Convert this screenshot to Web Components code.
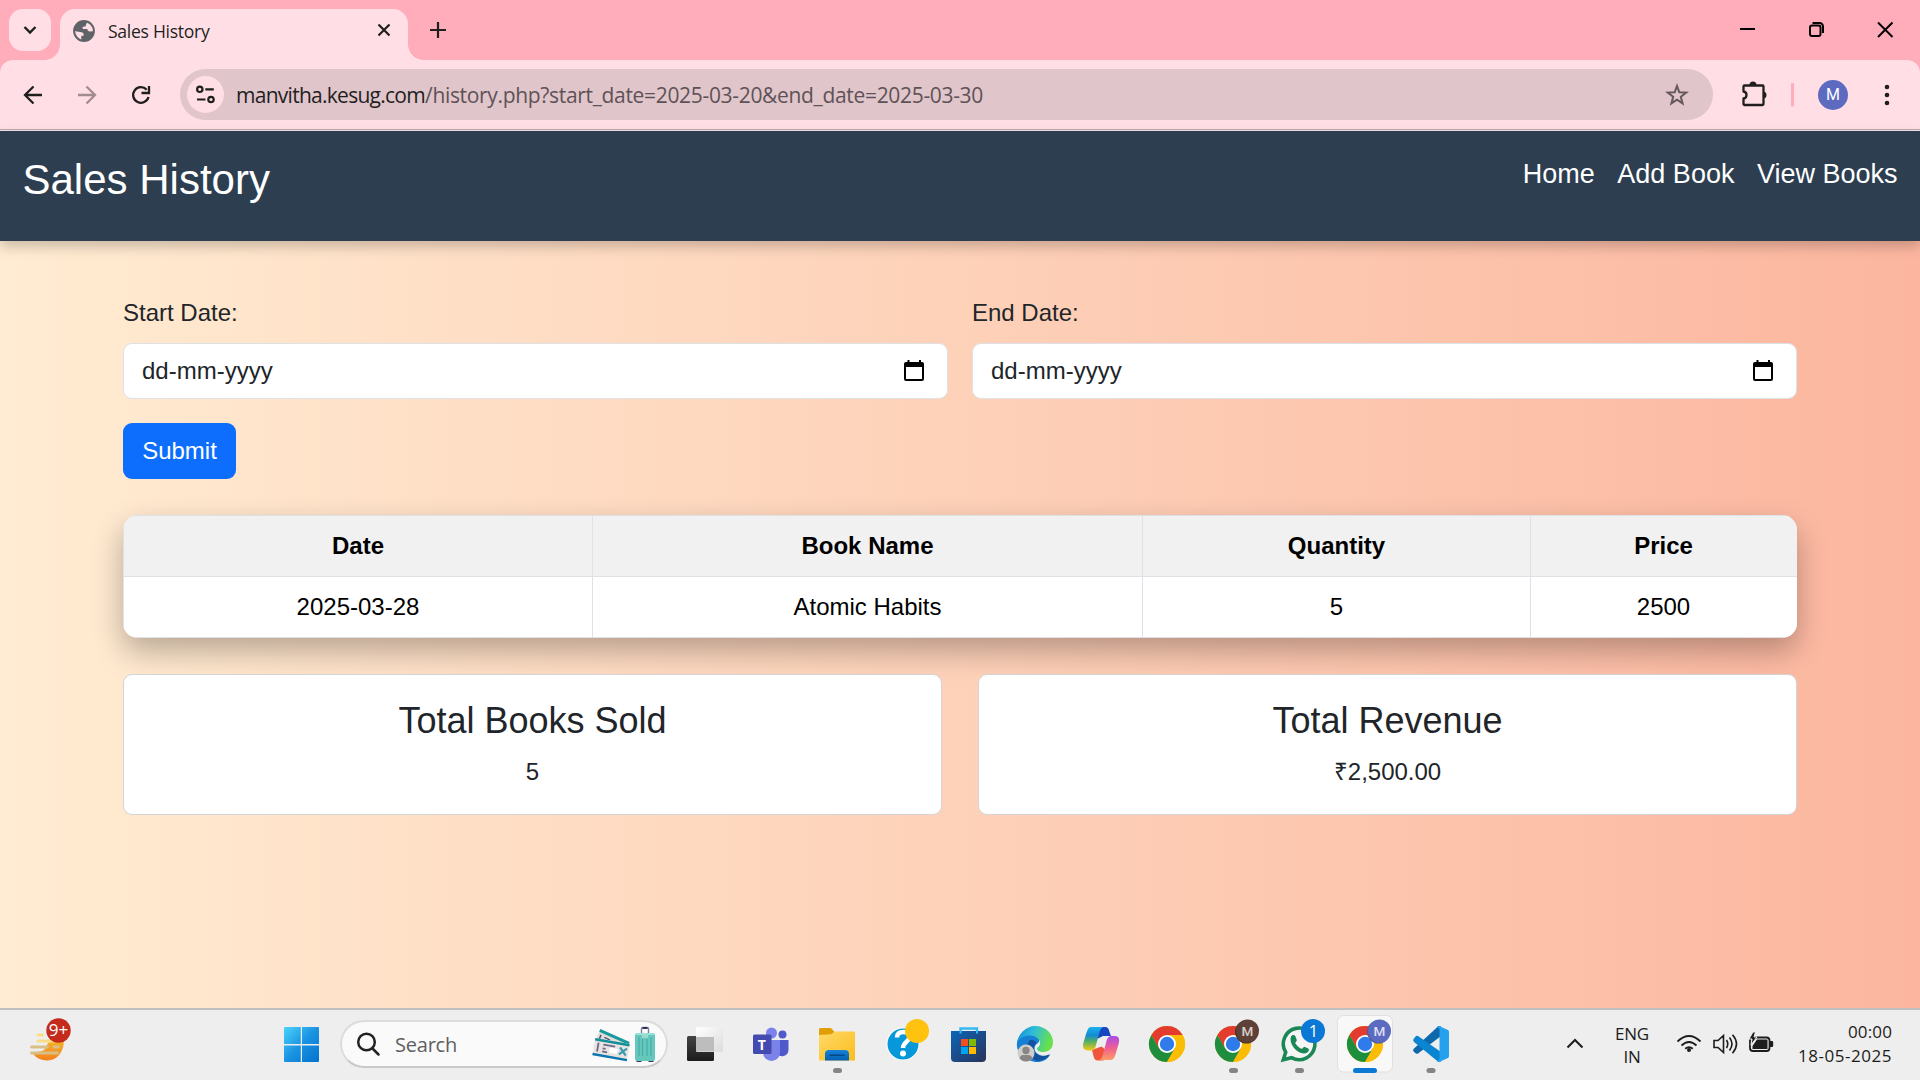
<!DOCTYPE html>
<html lang="en">
<head>
<meta charset="utf-8">
<title>Sales History</title>
<style>
html,body{margin:0;height:100%;overflow:hidden}
body{width:1920px;height:1080px;display:flex;flex-direction:column;font-family:"Open Sans","Noto Sans",sans-serif}
history-page{flex:1;min-height:0}
</style>
</head>
<body>
<browser-chrome></browser-chrome>
<history-page>
  <site-header slot="header" heading="Sales History"><a>Home</a><a>Add Book</a><a>View Books</a></site-header>
  <date-field label="Start Date:" slot="fields"></date-field>
  <date-field label="End Date:" slot="fields"></date-field>
  <sales-table></sales-table>
  <stat-card slot="stats" heading="Total Books Sold">5</stat-card>
  <stat-card slot="stats" heading="Total Revenue">₹2,500.00</stat-card>
</history-page>
<task-bar></task-bar>

<script>
const define = (name, html, init) => {
  const tpl = document.createElement('template');
  tpl.innerHTML = html;
  customElements.define(name, class extends HTMLElement {
    constructor(){ super(); this.attachShadow({mode:'open'}).append(tpl.content.cloneNode(true)); }
    connectedCallback(){ if (init) init(this, this.shadowRoot); }
  });
};

/* One line of text spread over a given width. */
define('fit-text', `<style>:host{display:block;white-space:nowrap;flex:none}span{display:inline-block}</style><span><slot></slot></span>`,
(el, root) => {
  const want = +el.getAttribute('w'), s = root.querySelector('span');
  el.style.width = want + 'px';
  const n = el.textContent.length;
  s.style.letterSpacing = ((want - s.getBoundingClientRect().width) / n) + 'px';
});

define('tab-strip', `<style>
:host{display:flex;height:60px;background:#ffacbb;color:#1f1f1f}
svg{display:block;flex:none}
.drop{width:42px;height:42px;border-radius:14px;background:#ffdfe5;margin:9px 9px 0 9px}
.tab{width:348px;height:51px;margin-top:9px;border-radius:15px 15px 0 0;background:#ffdfe5;display:flex;position:relative}
.tab::before,.tab::after{content:"";position:absolute;bottom:0;width:15px;height:15px}
.tab::before{left:-15px;background:radial-gradient(circle at 0 0,transparent 14.5px,#ffdfe5 15px)}
.tab::after{right:-15px;background:radial-gradient(circle at 100% 0,transparent 14.5px,#ffdfe5 15px)}
.globe{margin:10px 12px 0 12px}
fit-text{font-size:17.6px;line-height:24px;margin-top:10px}
.x{margin:12px 0 0 auto;margin-right:15px}
.plus{margin:20px 0 0 20px}
.win{margin-left:auto}
</style>
<div class="drop"><svg width="42" height="42" fill="none" stroke="#1f1f1f" stroke-width="2.4"><path d="M15.5 18l5.5 5.5 5.5-5.5"/></svg></div>
<div class="tab">
<svg class="globe" width="24" height="24" viewBox="0 0 24 24"><circle cx="12" cy="12" r="9.9" fill="none" stroke="#5f6368" stroke-width="2"/><path fill="#5f6368" d="M12 2.2c-6 0-9.8 4.6-9.8 9.8l7.2 1.2c1.4.2 2.2.9 2.2 2.1v1.4H9.300v4.6l3.400.6c5.400-.5 9-4.600 9.100-9.700l-4.300.2c-1.500 0-2.100-1-2.100-2.300H10.700V7.800l2.400-.2c1-.3.7-1.500.9-2.200l1.600-2.300z"/></svg>
<fit-text w="101.500">Sales History</fit-text>
<svg class="x" width="18" height="18" stroke="#1f1f1f" stroke-width="2.2"><path d="M3.500 3.500l11 11M14.500 3.500l-11 11"/></svg>
</div>
<svg class="plus" width="20" height="20" stroke="#1f1f1f" stroke-width="2.2"><path d="M10 2v16M2 10h16"/></svg>
<svg class="win" width="207" height="60" viewBox="1713 0 207 60" fill="none" stroke="#000" stroke-width="2"><path d="M1740 29h15M1878 22.500l14.500 14.500M1892.500 22.500L1878 37"/><rect x="1810" y="25.500" width="10.500" height="10.500" rx="2"/><path d="M1812.500 23h7a3.500 3.500 0 0 1 3.500 3.500v6.500"/></svg>`);

define('tool-bar', `<style>
:host{display:block;background:#ffacbb}
.in{display:flex;height:69px;background:#ffdfe5;border-radius:13px 13px 0 0}
svg{display:block;flex:none}
.omni{width:1533px;height:51px;margin-top:9px;border-radius:26px;background:#e0c5ca;display:flex;align-items:center;box-sizing:border-box;padding:0 21px 0 7px}
.tune{width:37px;height:37px;border-radius:50%;background:#ffdfe5;margin-right:12px}
.url{display:flex;font-size:21px;line-height:30px;color:#5e5256}
.url fit-text:first-child{color:#1f1f1f}
.star{margin-left:auto}
.me{width:30px;height:30px;border-radius:50%;background:#5c6bc0;color:#fff;font:16px/30px Roboto,sans-serif;text-align:center;margin-top:20px}
.line{height:2px;background:linear-gradient(#bda9ae 1px,#f3dfe4 1px)}
</style>
<div class="in">
<svg width="180" height="69" viewBox="0 60 180 69" fill="none" stroke="#1f1f1f" stroke-width="2.300"><path d="M42 95H26M33.500 86.500L25 95l8.500 8.500"/><path stroke="#a18c91" d="M78 95h16M86.500 86.500L95 95l-8.500 8.500"/><path d="M146.700 89.700A7.800 7.800 0 1 0 148.500 97"/><path d="M149 86v7h-7.500"/></svg>
<div class="omni">
<svg class="tune" width="37" height="37" fill="none" stroke="#1f1f1f" stroke-width="2.200"><circle cx="12.800" cy="13.300" r="2.700"/><path d="M18.300 13.300h8.500M10 23.500h8.500"/><circle cx="24" cy="23.500" r="2.700"/></svg>
<div class="url"><fit-text w="189">manvitha.kesug.com</fit-text><fit-text w="558">/history.php?start_date=2025-03-20&amp;end_date=2025-03-30</fit-text></div>
<svg class="star" width="30" height="30" fill="none" stroke="#66595d" stroke-width="2"><path d="M15 6l2.300 6.300 6.900.3-5.400 4.200 1.800 6.600-5.600-3.800-5.600 3.800 1.800-6.600-5.400-4.200 6.900-.3z"/></svg>
</div>
<svg width="105" height="69" viewBox="1713 60 105 69"><path fill="none" stroke="#1f1f1f" stroke-width="2.300" stroke-linejoin="round" d="M1744.500 85.500h18a1 1 0 0 1 1 1v17.500a1 1 0 0 1-1 1h-18a1 1 0 0 1-1-1v-5.500c4-.5 4-6.500 0-7V86.500a1 1 0 0 1 1-1z"/><path fill="#1f1f1f" d="M1749.500 85a3.500 3.500 0 0 1 7 0zM1763 91.500a3.500 3.500 0 0 1 0 7z"/><rect x="1791" y="83" width="3" height="23.500" rx="1" fill="#ffacbb"/></svg>
<div class="me">M</div>
<svg width="72" height="69" viewBox="1848 60 72 69" fill="#1f1f1f"><circle cx="1887" cy="87" r="2.300"/><circle cx="1887" cy="95" r="2.300"/><circle cx="1887" cy="103" r="2.300"/></svg>
</div><div class="line"></div>`);

define('browser-chrome', `<style>:host{display:block;flex:none;height:131px}</style><tab-strip></tab-strip><tool-bar></tool-bar>`);

define('site-header', `<style>
:host{display:flex;justify-content:space-between;align-items:flex-start;box-sizing:border-box;height:110px;padding:22.500px;background:#2c3e50;color:#fff;box-shadow:0 6px 12px rgba(0,0,0,.2);position:relative}
h1{margin:0;font-size:42px;font-weight:400;line-height:52.500px}
nav{display:flex;gap:22.500px;font-size:27px;line-height:40.500px}
</style><h1></h1><nav><slot></slot></nav>`, (el, r) => r.querySelector('h1').textContent = el.getAttribute('heading'));

define('date-field', `<style>
:host{display:block}
label{display:block;line-height:36px;margin-bottom:12px}
.box{height:56px;box-sizing:border-box;border:1px solid #dee2e6;border-radius:9px;background:#fff;padding:0 18px;display:flex;align-items:center;justify-content:space-between}
svg{margin-right:4px}
</style><label></label><div class="box"><span>dd-mm-yyyy</span><svg width="21" height="22"><path fill="#000" fill-rule="evenodd" d="M3.500 0h2v2h9.500V0h2v2h1q2 0 2 2v15q0 2-2 2h-16q-2 0-2-2V4q0-2 2-2h1.500zM2 7v12h16V7z"/></svg></div>`,
(el, r) => r.querySelector('label').textContent = el.getAttribute('label'));

define('sales-table', `<style>
:host{display:block;border-radius:15px;overflow:hidden;box-shadow:0 13px 30px rgba(0,0,0,.28)}
.t{display:grid;grid-template-columns:468px 549px 387px 266px;gap:1px;background:#dee2e6;border:1px solid #dee2e6;text-align:center;color:#000;line-height:60px}
.t>*{background:#fff;height:60px}
.t>b{background:#f1f1f1}
.t>:nth-child(4n){text-indent:-1px}
</style><div class="t"><b>Date</b><b>Book Name</b><b>Quantity</b><b>Price</b><span>2025-03-28</span><span>Atomic Habits</span><span>5</span><span>2500</span></div>`);

define('stat-card', `<style>
:host{display:block;box-sizing:border-box;height:141px;padding:24px;border:1px solid #d3d4d5;border-radius:9px;background:#fff;text-align:center;position:relative}
h5{margin:0 0 12px;font-size:36px;font-weight:400;line-height:43px}
p{margin:0;line-height:36px}
</style><h5></h5><p><slot></slot></p>`, (el, r) => r.querySelector('h5').textContent = el.getAttribute('heading'));

define('history-page', `<style>
:host{display:block;background:linear-gradient(to right,#ffecd2,#fcb69f);font-family:"Liberation Sans",Arial,sans-serif;font-size:24px;color:#212529}
main{width:1674px;margin:0 auto;padding-top:54px}
.fields{display:grid;grid-template-columns:1fr 1fr;gap:24px}
button{display:block;margin:24px 0 36px;width:113px;height:56px;border:0;border-radius:9px;background:#0d6efd;color:#fff;font:inherit;padding:0}
.stats{display:grid;grid-template-columns:1fr 1fr;gap:36px;margin-top:36px}
</style><slot name="header"></slot><main><div class="fields"><slot name="fields"></slot></div><button>Submit</button><slot></slot><div class="stats"><slot name="stats"></slot></div></main>`);

/* Taskbar icons, all drawn in a 66x70 slot centred on (33,34). */
const chrome = `<circle cx="33" cy="34" r="18" fill="#fbbc05"/><path fill="#e33b2e" d="M17.400 25a18 18 0 0 1 31.200 0H33l-7.800 13.500z"/><path fill="#1e8e3e" d="M17.400 25a18 18 0 0 0 15.600 27l7.800-13.500H25.200z"/><path fill="#fbbc05" d="M48.600 25A18 18 0 0 1 33 52l7.800-13.500L33 25z"/><circle cx="33" cy="34" r="9" fill="#fff"/><circle cx="33" cy="34" r="7.200" fill="#2f7bea"/>`;
const ICONS = {
taskview:`<defs><linearGradient id="a" x2="0" y2="1"><stop stop-color="#444"/><stop offset="1" stop-color="#1c1c1c"/></linearGradient><linearGradient id="b" x2="1" y2="1"><stop stop-color="#fff"/><stop offset="1" stop-color="#dcdcdc"/></linearGradient></defs><rect x="15" y="26" width="27" height="25" rx="1.500" fill="url(#a)"/><rect x="24" y="17" width="27" height="25" rx="1.500" fill="url(#b)"/><path fill="#bdbdbd" d="M24 27h18v14.500H25a1 1 0 0 1-1-1z"/>`,
teams:`<circle cx="33.500" cy="23" r="5.500" fill="#7b83eb"/><circle cx="44.500" cy="24.500" r="4" fill="#5059c9"/><path fill="#5059c9" d="M38 30h12.500v9.500a6 6 0 0 1-12.500 1z"/><path fill="#7b83eb" d="M25 30h17v12.500a8.500 8.500 0 0 1-17 0z"/><rect x="15" y="24.500" width="18.500" height="19.500" rx="1.500" fill="#444bb0"/><text x="23.900" y="39.500" text-anchor="middle" font-family="Open Sans" font-weight="700" font-size="14" fill="#fff">T</text>`,
folder:`<defs><linearGradient id="a" x2="1" y2="1"><stop stop-color="#ffda6a"/><stop offset="1" stop-color="#fbbc1c"/></linearGradient><linearGradient id="b" x2="0" y2="1"><stop stop-color="#1583d8"/><stop offset="1" stop-color="#0461b4"/></linearGradient></defs><path fill="#e19f06" d="M15 19.500q0-1.500 1.500-1.500H26q1 0 2 1l2.500 3V28H15z"/><path fill="url(#a)" d="M15 25l12-.800q1-.2 2-1.200l1.500-1.500H50q1 0 1 1V50.500H15z"/><path fill="url(#b)" d="M21 50.500V44q0-4 4-4h16q4 0 4 4v6.500z"/><path d="M26 45.300h14" stroke="#064787" stroke-width="1.600" stroke-linecap="round"/>`,
help:`<circle cx="33" cy="34" r="16.500" fill="#fff"/><circle cx="33" cy="34" r="15.500" fill="#0698d8"/><path d="M27 27.500q0-5.500 6.500-5.500t6 5c0 4.500-6.500 5-6.500 11" fill="none" stroke="#fff" stroke-width="4.500"/><circle cx="33" cy="43.500" r="3" fill="#fff"/><circle cx="47" cy="21" r="12" fill="#ffc20e"/>`,
store:`<defs><linearGradient id="a" x2="1" y2="1"><stop stop-color="#0d64b8"/><stop offset="1" stop-color="#29335a"/></linearGradient></defs><path d="M24.500 24v-5.500h16.500V24" fill="none" stroke="#35b9f1" stroke-width="2.400"/><path fill="url(#a)" d="M15 21h35v27q0 4-4 4H19q-4 0-4-4z"/><path d="M24.500 21v2.500M41 21v2.500" stroke="#35b9f1" stroke-width="2"/><path fill="#f25022" d="M25 29h7v7h-7z"/><path fill="#7fba00" d="M33 29h7v7h-7z"/><path fill="#00a4ef" d="M25 37h7v7h-7z"/><path fill="#ffb900" d="M33 37h7v7h-7z"/>`,
edge:`<defs><linearGradient id="a" x2="1" y2=".3"><stop stop-color="#1487d8"/><stop offset=".5" stop-color="#30bfd6"/><stop offset="1" stop-color="#68e04c"/></linearGradient></defs><path fill="#1580d4" d="M15 33c1-8 10-11 17-8 6 2 6 6 4 8-4 2-5 8 0 11 4 3 9 3 12 1-4 7-13 9-21 5C19 47 14 41 15 33z"/><path fill="#1452a0" d="M27 31c-4 7-1 17 8 20 6 0 11-3 13-7-5 3-16 3-16-6 0-4 3-5 3-5s-5-6-8-2z"/><path fill="url(#a)" d="M15 33c1-9 9-17 18-17 11 0 18 8 18 16 0 8-6 10-10 10s-6-2-6-3c0-2 3-2 3-6 0-8-16-12-23 0z"/><circle cx="24" cy="43" r="8.500" fill="#d0cecb"/><circle cx="24" cy="40.500" r="3.700" fill="#8a8683"/><path fill="#8a8683" d="M17.500 48.500q1-4 4-3.500h5q3 0 4 3.500a8.500 8.500 0 0 1-13 0z"/>`,
copilot:`<defs><linearGradient id="a" x2="0" y2="1"><stop stop-color="#1cb2f2"/><stop offset=".35" stop-color="#128bd3"/><stop offset=".6" stop-color="#4fae68"/><stop offset="1" stop-color="#f6c915"/></linearGradient><linearGradient id="b" x2="0" y2="1"><stop stop-color="#a94bea"/><stop offset=".5" stop-color="#ee5f92"/><stop offset="1" stop-color="#ff9b62"/></linearGradient></defs><path fill="#1846c0" d="M30 17h7c3 0 4 2 4.500 5l1.500 4h-8l-6 3z"/><path fill="#f1543d" d="M24 40l1.500 6c1 4 2.500 4.500 5 4.500h5l4-9-6-5z"/><path fill="url(#a)" d="M23 17h12c-2 1-3 3-4 7l-3 11c-1 4-2 5.500-5 5.500h-3c-4 0-6-3-4.500-8l3-10c1.500-4 2.500-5.500 4.500-5.500z"/><path fill="url(#b)" d="M43.500 26H47c3.500 0 5 3 3.700 7.500l-3.200 11C46 49 44.500 50 42 50H30.500c2.500 0 3.700-3 4.500-6l3-11c1.200-5 2.500-7 5.500-7z"/>`,
chrome,
chromeM: chrome+`<circle cx="46.500" cy="22" r="11.500" fill="#4a332c"/><circle cx="47.500" cy="21" r="11.500" fill="#5d4037"/><text x="47.300" y="26" text-anchor="middle" font-family="Roboto" font-weight="500" font-size="13.500" fill="#d9cfcb">M</text><rect x="29" y="58" width="9" height="5" rx="2.500" fill="#858585"/>`,
whatsapp:`<path fill="#fff" fill-opacity=".4" d="M16 51l3-9a16 16 0 1 1 6 6.500z"/><path fill="none" stroke="#1b8755" stroke-width="3.600" d="M17.300 49.800l2.400-7.600a15.800 15.800 0 1 1 5.800 5.500z"/><path fill="#1b8755" d="M25 26.500c2-2.500 4-1.500 4.500 0l1.300 3.500c.4 1-1.500 2-1.500 2.800 0 1.500 4.500 6 6.500 6 1 0 2-2.300 3-1.900l3.500 1.700c1.500 1 0 4-2 4.500-7 2.500-18-8-15.300-16.600z"/><circle cx="47" cy="21" r="12" fill="#0a78d4"/><text x="47.500" y="27" text-anchor="middle" font-family="Open Sans" font-size="16.500" fill="#fff">1</text><rect x="29" y="58" width="9" height="5" rx="2.500" fill="#858585"/>`,
active:`<rect x="5.500" y="5.500" width="55" height="56.500" rx="6" fill="#f8f8f8" stroke="#e0e0e0"/>`+chrome+`<circle cx="46.500" cy="22" r="11.500" fill="#4c599f"/><circle cx="47.500" cy="21" r="11.500" fill="#5c6bc0"/><text x="47.300" y="26" text-anchor="middle" font-family="Roboto" font-weight="500" font-size="13.500" fill="#dcdff0">M</text><rect x="21" y="58" width="24" height="5" rx="2.500" fill="#0a78d4"/>`,
vscode:`<path fill="#0e69ac" d="M15.500 39q-1 1.500.5 3l2 1.500q1 .6 2 0L43 26V16.500l-2.500-.5z"/><path fill="#0b85d0" d="M15.500 29l2.500-3q1-.6 2 0L43 42v9.500l-2.500.5L16 32q-1.500-1.500-.5-3z"/><path fill="#26a1ee" d="M41 16l9 4q1 .5 1 2v24q0 1.500-1 2l-9 4q-1.500 0-2-1l2.500-2V19l-2.500-2q.5-1 2-1z"/><rect x="28.500" y="58" width="9" height="5" rx="2.500" fill="#858585"/>`
};
ICONS.folder += `<rect x="29" y="58" width="9" height="5" rx="2.500" fill="#858585"/>`;
define('app-icon', `<style>:host{display:block;flex:none}svg{display:block}</style><svg width="66" height="70" viewBox="0 0 66 70"></svg>`,
(el, r) => r.querySelector('svg').innerHTML = ICONS[el.getAttribute('name')]);

define('search-pill', `<style>
:host{display:flex;box-sizing:border-box;width:328px;height:48px;border:2px solid #dcdcdc;border-bottom-color:#c9c9c9;border-radius:24px;background:#fafafa;flex:none}
svg{display:block;flex:none}
fit-text{font-size:20px;line-height:28px;color:#5f5f5f;margin:9px 0 0 9px}
.art{margin-left:auto;margin-right:1px}
</style>
<svg width="44" height="44" fill="none" stroke="#222" stroke-width="2.500" stroke-linecap="round"><circle cx="24.500" cy="20" r="8.300"/><path d="M30.500 26.500l6 6"/></svg>
<fit-text w="62">Search</fit-text>
<svg class="art" width="80" height="44" viewBox="585 1022 80 44">
<g transform="rotate(24 600 1030)"><rect x="600" y="1029" width="32" height="14" fill="#e2ded9"/><path d="M600 1029h32v3h-32z" fill="#179a9c"/><path d="M603 1034v6M607 1035h6m-6 3h8" stroke="#54547b" stroke-width="1.500"/></g>
<g transform="rotate(10 595 1040)"><rect x="595" y="1038" width="35" height="17" fill="#e8e3df"/><path d="M595 1038h35v2.500h-35z" fill="#128f9b"/><path d="M595 1053h35v2.500h-35z" fill="#0b77ae"/><path d="M599 1042v9M604 1043h12M604 1047h3m-3 3h5" stroke="#6b6a8c" stroke-width="1.800"/><path fill="#fff" d="M611 1045h8v5h-8z"/><path d="M621 1043l7 7m0-7l-7 7" stroke="#3b9ab2" stroke-width="2.200"/></g>
<path d="M641.500 1034v-5q0-1.500 1.500-1.500h4q1.500 0 1.500 1.500v5" fill="none" stroke="#7a7f91" stroke-width="1.400"/><path d="M642.500 1028h5" stroke="#30335c" stroke-width="2"/>
<rect x="636.500" y="1060" width="5" height="2" fill="#3c3a60"/><rect x="648.500" y="1060" width="5" height="2" fill="#3c3a60"/>
<rect x="635" y="1033" width="20" height="28" rx="2.500" fill="#66c8bd"/><path d="M637 1033h16q2 0 2 2H635q0-2 2-2z" fill="#95e2d8"/><path d="M639 1037v19M642.500 1039v17M647 1039v17M651 1037v19" stroke="#46aea5" stroke-width="1.200"/><path fill="#9fd8cd" d="M642 1035h6v3h-6z"/>
</svg>`);

define('system-tray', `<style>
:host{display:flex;margin-left:auto;height:70px;color:#1c1c1c;font-size:17px;flex:none}
svg{display:block;flex:none}
.c{display:flex;flex-direction:column;align-items:center}
.r{display:flex;flex-direction:column;align-items:flex-end}
.c fit-text{line-height:23px}.r fit-text{line-height:24px}
.c{padding-top:12px}.r{padding-top:10px}
.i{margin:0 0 0 14px}
.r{margin:0 28px 0 12px}
</style>
<svg width="56" height="70" viewBox="1559 1010 56 70" fill="none" stroke="#1c1c1c" stroke-width="2"><path d="M1567.500 1047.500l7.500-7.500 7.500 7.500"/></svg>
<div class="c"><fit-text w="34">ENG</fit-text><fit-text w="17">IN</fit-text></div>
<svg class="i" width="123" height="70" viewBox="1663 1010 123 70" fill="none" stroke="#1c1c1c" stroke-width="1.800">
<path d="M1677.500 1041.500q11.500-11 23 0M1681.500 1045.500q7.500-7 15 0M1685.200 1048.800q3.800-3 7.600 0"/><circle cx="1689" cy="1050" r="2" fill="#1c1c1c" stroke="none"/>
<path d="M1714 1040.500h4l5.500-5v17l-5.500-5h-4zM1726.500 1040q2.500 4 0 8M1729.500 1037.500q5 6.500 0 13M1732.500 1034.800q8 9.200 0 18.400" stroke-width="1.600"/>
<rect x="1750" y="1037.500" width="19.500" height="13.500" rx="3"/><path fill="#1c1c1c" stroke="none" d="M1752.500 1049v-3l4.500-6.500h10.500v9.500zM1770 1041h2q1.200 0 1.200 1.200v3.600q0 1.200-1.200 1.200h-2z"/><path fill="#1c1c1c" stroke="#eee" stroke-width="1" d="M1753 1032l-4 7h3l-1 6 6-8h-3l1.500-5z"/>
</svg>
<div class="r"><fit-text w="44">00:00</fit-text><fit-text w="94">18-05-2025</fit-text></div>`);

define('task-bar', `<style>
:host{display:flex;flex:none;height:72px;box-sizing:border-box;border-top:2px solid #bfbfbf;background:#eee}
svg{display:block;flex:none}
search-pill{margin:10px 4px 0 20px}
</style>
<svg width="320" height="70" viewBox="0 1010 320 70">
<defs><linearGradient id="w" x1="284" y1="1027" x2="319" y2="1062" gradientUnits="userSpaceOnUse"><stop stop-color="#4bd3fb"/><stop offset=".5" stop-color="#1a93e2"/><stop offset="1" stop-color="#0272cd"/></linearGradient><linearGradient id="o" x2="0" y2="1"><stop stop-color="#f5b52a"/><stop offset="1" stop-color="#f2801d"/></linearGradient></defs>
<path fill="url(#o)" d="M32 1052c4 0 9 0 12-2s2-8 8-9c6 0 12-1 12-1 0 12-7 20.500-16.500 20.500-8 0-13-4-15.500-8.500z"/>
<path d="M38 1035h4.500M38 1041h16" stroke="#f8dd84" stroke-width="3" stroke-linecap="round"/><path d="M31.500 1047h16M54 1047h4.500M31.500 1053h26" stroke="#d9bf85" stroke-width="2.800" stroke-linecap="round"/>
<circle cx="58.500" cy="1030.500" r="12.200" fill="#c42b1c"/><text x="58.500" y="1036.200" text-anchor="middle" font-family="Open Sans" font-size="17" fill="#fff">9+</text>
<path fill="url(#w)" d="M285 1027h15.800v17H284v-16q0-1 1-1zM302 1027h16q1 0 1 1v16h-17zM284 1045.500h16.800V1062H285q-1 0-1-1zM302 1045.500h17V1061q0 1-1 1h-16z"/>
</svg>
<search-pill></search-pill>
${Object.keys(ICONS).map(n => `<app-icon name="${n}"></app-icon>`).join('')}
<system-tray></system-tray>`);
</script>
</body>
</html>
